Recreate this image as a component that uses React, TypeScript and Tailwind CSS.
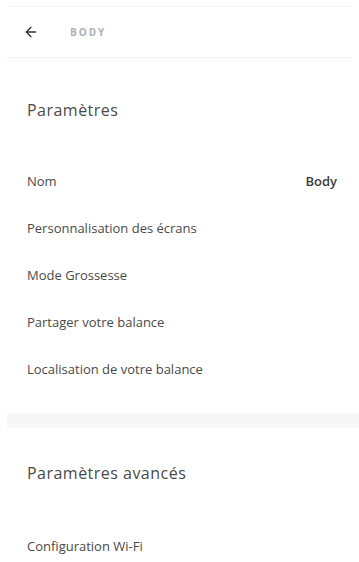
import React from "react";
import { ArrowLeft } from "lucide-react";

const Row = ({ label, value }: { label: string; value?: string }) => (
  <div className="h-[47px] flex items-center justify-between pl-[27px] pr-[22px]">
    <span className="text-[13px] text-[#4a4a4a]">{label}</span>
    {value && <span className="text-[13px] font-semibold text-[#3a3a3a]">{value}</span>}
  </div>
);

export default function App() {
  return (
    <div
      className="w-[359px] h-[562px] bg-white overflow-hidden"
      style={{ fontFamily: '"Open Sans", "Noto Sans", sans-serif' }}
    >
      <div className="h-[6px]" />
      <div className="mx-[7px] h-px bg-[#f1f1f1]" />
      <div className="h-[50px] flex items-center pl-[23px]">
        <ArrowLeft size={16} strokeWidth={2} className="text-[#333]" />
        <span className="ml-[31px] text-[10px] font-bold tracking-[0.2em] text-[#aab1b7]">BODY</span>
      </div>
      <div className="mx-[7px] h-px bg-[#eeeeee]" />
      <div className="h-[100px] flex items-center pl-[27px] pt-[4px]">
        <span className="text-[16px] text-[#4a4a4a] tracking-[0.03em]">Paramètres</span>
      </div>
      <Row label="Nom" value="Body" />
      <Row label="Personnalisation des écrans" />
      <Row label="Mode Grossesse" />
      <Row label="Partager votre balance" />
      <Row label="Localisation de votre balance" />
      <div className="mt-[20px] ml-[7px] h-[15px] bg-[#f7f7f7]" />
      <div className="h-[90px] flex items-center pl-[27px]">
        <span className="text-[16px] text-[#4a4a4a] tracking-[0.03em]">Paramètres avancés</span>
      </div>
      <div className="mt-[5px]">
        <Row label="Configuration Wi-Fi" />
      </div>
    </div>
  );
}
